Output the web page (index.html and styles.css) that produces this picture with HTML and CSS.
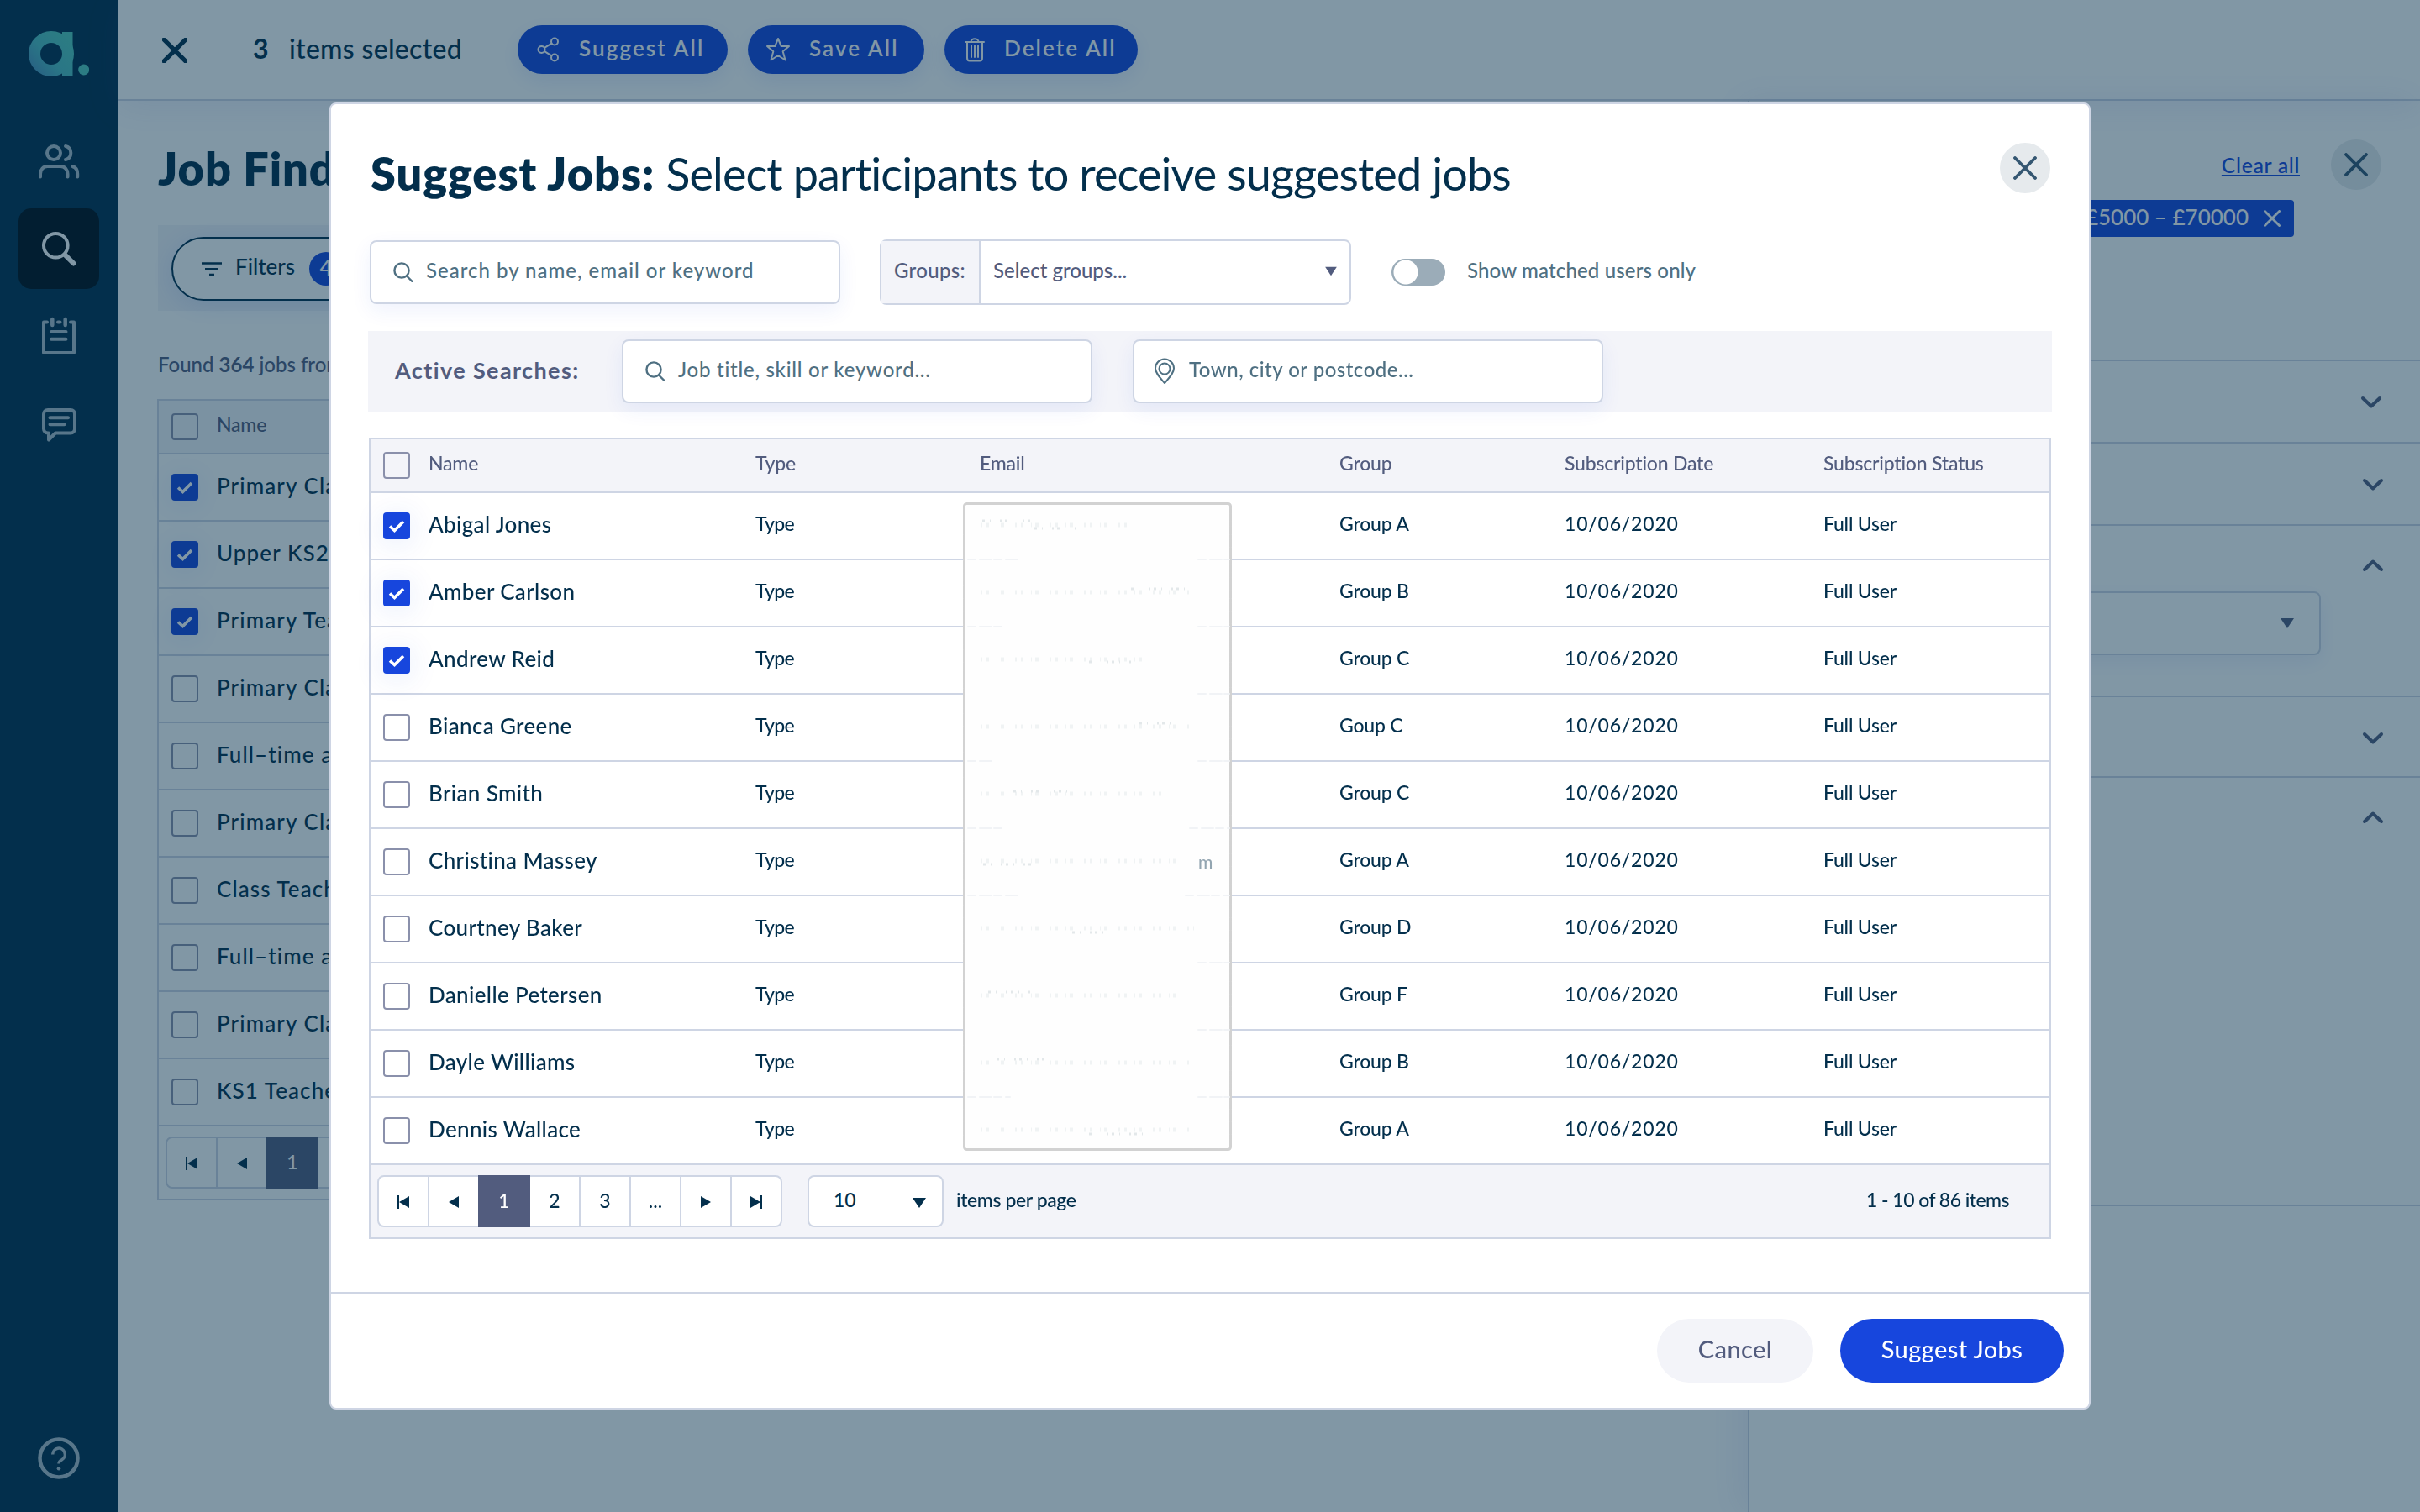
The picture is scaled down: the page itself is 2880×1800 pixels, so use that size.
FILE: index.html
```html
<!DOCTYPE html>
<html lang="en">
<head>
  <meta charset="UTF-8">
  <meta name="viewport" content="width=device-width, initial-scale=1.0">
  <title>Suggest Jobs</title>
  <link rel="stylesheet" href="styles.css">
</head>
<body>
  <svg class="sprite">
    <symbol id="cross" viewBox="0 0 28 28"><path d="M2 2 26 26M26 2 2 26"/></symbol>
    <symbol id="chevron" viewBox="0 0 26 16"><path d="M3 3 13 12.5 23 3"/></symbol>
    <symbol id="search" viewBox="0 0 24 24"><circle cx="10" cy="10" r="8.6"/><path d="M16 16.5 22.5 23"/></symbol>
    <symbol id="first" viewBox="0 0 16 16"><path d="M1 0h2v16H1zM15 1v14L3 8z"/></symbol>
    <symbol id="prev" viewBox="0 0 16 16"><path d="M14 1v14L2 8z"/></symbol>
    <symbol id="next" viewBox="0 0 16 16"><path d="M2 1v14l12-7z"/></symbol>
    <symbol id="last" viewBox="0 0 16 16"><path d="M13 0h2v16h-2zM1 1v14l12-7z"/></symbol>
    <symbol id="down" viewBox="0 0 16 14"><path d="M0 1h16L8 13z"/></symbol>
    <symbol id="tick" viewBox="0 0 20 16"><path d="M2 8.5 7.5 13.5 18 3"/></symbol>
  </svg>

  <div class="app">
    <nav class="sidebar">
      <svg class="logo" viewBox="0 0 72 54">
        <defs>
          <linearGradient id="teal" gradientUnits="userSpaceOnUse" x1="4" y1="50" x2="50" y2="10">
            <stop offset="0" stop-color="#4c8fba"/>
            <stop offset=".45" stop-color="#50bcc0"/>
            <stop offset="1" stop-color="#54c9ba"/>
          </linearGradient>
        </defs>
        <circle cx="27" cy="27" r="20" fill="none" stroke="url(#teal)" stroke-width="14"/>
        <rect x="40" y="1" width="12.5" height="52" fill="url(#teal)"/>
        <circle cx="65.7" cy="46" r="6.5" fill="#54c9ba"/>
      </svg>
      <div class="nav-item">
        <svg viewBox="0 0 96 96"><circle cx="42" cy="38" r="8"/><path d="M56 30c4.500 1 6.300 4.500 6.300 8s-2 7-6.300 8M26 66.500V63c0-5 3.500-9 8.500-9h15.500c5 0 8.500 4 8.500 9v3.500M64.500 54.200c4 1 5.700 4.500 5.700 8.800v3.500"/></svg>
      </div>
      <div class="nav-item active">
        <svg viewBox="0 0 96 96"><circle cx="44.300" cy="44.300" r="14.300"/><path class="handle" d="M56 56 65.500 65.500"/></svg>
      </div>
      <div class="nav-item">
        <svg viewBox="0 0 96 96"><path d="M34 31.500h-4v36.500h36V31.500h-4M47 31.500h2.500M39 43h17.500M39 51.700h17.500"/><path class="ring" d="M40.300 28v7M55.700 28v7"/></svg>
      </div>
      <div class="nav-item">
        <svg viewBox="0 0 96 96"><path d="M36 67.500V59.500h-1c-3 0-5-2-5-5V37c0-3 2-5 5-5h27c3 0 5 2 5 5v17.500c0 3-2 5-5 5H44zM37.500 41.300h21.500M37.500 49.300h17"/></svg>
      </div>
      <svg class="help" viewBox="-25 -25 50 50"><circle r="22.500"/><path d="M-7.300-4.500a7.300 7.300 0 1 1 11 6.200C1 3.200 0 4 0 6.500"/><circle class="dot" cy="12.200" r="2.300"/></svg>
    </nav>

    <div class="main">
      <header class="topbar">
        <svg class="icon topbar-close"><use href="#cross"/></svg>
        <div class="selected"><b>3</b><span>items selected</span></div>
        <div class="actions">
          <div class="action suggest">
            <svg viewBox="0 0 28 30"><circle cx="5.500" cy="15" r="4"/><circle cx="21" cy="5.500" r="4"/><circle cx="21" cy="24.500" r="4"/><path d="M9 12.800 17.500 7.600M9 17.200l8.500 5.200"/></svg>
            <span>Suggest All</span>
          </div>
          <div class="action save">
            <svg viewBox="0 0 30 30"><path d="M15 2l3.700 9H28l-7.300 6.300L23.500 27.500 15 22l-8.500 5.500L9.300 17.300 2 11h9.300z"/></svg>
            <span>Save All</span>
          </div>
          <div class="action delete">
            <svg viewBox="0 0 26 30"><path d="M2 6h22M8.500 6c0-5 9-5 9 0M4 6v19c0 2 1 3.500 3 3.500h12c2 0 3-1.500 3-3.500V6M9 10.500v13.500M13 10.500v13.500M17 10.500v13.500"/></svg>
            <span>Delete All</span>
          </div>
        </div>
      </header>

      <div class="content">
        <section class="list">
          <h1>Job Finder</h1>
          <div class="filter-bar">
            <div class="filter-pill">
              <svg viewBox="0 0 24 17"><path d="M0 1.500h24M4 8.200h16M9 15h6"/></svg>
              <span>Filters</span>
              <div class="badge">4</div>
            </div>
          </div>
          <p class="found">Found <b>364</b> jobs from</p>
          <div class="table">
            <div class="row head"><i class="check"></i><span class="cell">Name</span></div>
            <div class="row"><i class="check on"><svg><use href="#tick"/></svg></i><span class="name">Primary Class Teacher</span></div>
            <div class="row"><i class="check on"><svg><use href="#tick"/></svg></i><span class="name">Upper KS2 Teacher</span></div>
            <div class="row"><i class="check on"><svg><use href="#tick"/></svg></i><span class="name">Primary Teacher</span></div>
            <div class="row"><i class="check"></i><span class="name">Primary Class Teacher</span></div>
            <div class="row"><i class="check"></i><span class="name">Full–time assistant</span></div>
            <div class="row"><i class="check"></i><span class="name">Primary Class Teacher</span></div>
            <div class="row"><i class="check"></i><span class="name">Class Teacher</span></div>
            <div class="row"><i class="check"></i><span class="name">Full–time assistant</span></div>
            <div class="row"><i class="check"></i><span class="name">Primary Class Teacher</span></div>
            <div class="row"><i class="check"></i><span class="name">KS1 Teacher</span></div>
            <div class="pager plain">
              <div class="pages">
                <span class="step"><svg><use href="#first"/></svg></span>
                <span class="step back"><svg><use href="#prev"/></svg></span>
                <span class="current">1</span>
                <span>2</span>
                <span>3</span>
                <span>...</span>
                <span><svg><use href="#next"/></svg></span>
                <span><svg><use href="#last"/></svg></span>
              </div>
            </div>
          </div>
        </section>

        <aside class="panel">
          <div class="panel-head">
            <div class="panel-top">
              <a class="clear">Clear all</a>
              <div class="round"><svg class="icon"><use href="#cross"/></svg></div>
            </div>
            <div class="tag"><span>£5000 – £70000</span><svg class="icon"><use href="#cross"/></svg></div>
          </div>
          <div class="section first"><svg class="chevron"><use href="#chevron"/></svg></div>
          <div class="section"><svg class="chevron"><use href="#chevron"/></svg></div>
          <div class="section open">
            <svg class="chevron up"><use href="#chevron"/></svg>
            <div class="panel-select"><svg class="arrow"><use href="#down"/></svg></div>
          </div>
          <div class="section short"><svg class="chevron"><use href="#chevron"/></svg></div>
          <div class="section open tall"><svg class="chevron up"><use href="#chevron"/></svg></div>
        </aside>
      </div>
    </div>
  </div>

  <div class="overlay">
    <div class="modal">
      <div class="modal-body">
        <div class="modal-head">
          <h2><b>Suggest Jobs:</b> <span>Select participants to receive suggested jobs</span></h2>
          <div class="round"><svg class="icon"><use href="#cross"/></svg></div>
        </div>

        <div class="filters">
          <div class="input"><svg class="lens"><use href="#search"/></svg><span class="hint-name">Search by name, email or keyword</span></div>
          <div class="groups">
            <div class="groups-label">Groups:</div>
            <div class="groups-value">Select groups...</div>
            <svg class="arrow"><use href="#down"/></svg>
          </div>
          <div class="toggle"></div>
          <div class="toggle-label">Show matched users only</div>
        </div>

        <div class="searches">
          <b>Active Searches:</b>
          <div class="input"><svg class="lens"><use href="#search"/></svg><span class="hint-job">Job title, skill or keyword...</span></div>
          <div class="input">
            <svg class="pin" viewBox="0 0 26 32"><path d="M13 30C7 23 2 18 2 12.500a11 11 0 0 1 22 0C24 18 19 23 13 30z"/><circle cx="13" cy="13" r="6.500"/></svg>
            <span class="hint-town">Town, city or postcode...</span>
          </div>
        </div>

        <div class="table users">
          <div class="row head"><i class="check"></i><span class="cell">Name</span><span class="cell">Type</span><span class="cell">Email</span><span class="cell">Group</span><span class="cell">Subscription Date</span><span class="cell">Subscription Status</span></div>
          <div class="row"><i class="check on"><svg><use href="#tick"/></svg></i><span class="name">Abigal Jones</span><span class="cell type">Type</span><span></span><span class="cell">Group A</span><span class="cell date">10/06/2020</span><span class="cell">Full User</span></div>
          <div class="row"><i class="check on"><svg><use href="#tick"/></svg></i><span class="name">Amber Carlson</span><span class="cell type">Type</span><span></span><span class="cell">Group B</span><span class="cell date">10/06/2020</span><span class="cell">Full User</span></div>
          <div class="row"><i class="check on"><svg><use href="#tick"/></svg></i><span class="name">Andrew Reid</span><span class="cell type">Type</span><span></span><span class="cell">Group C</span><span class="cell date">10/06/2020</span><span class="cell">Full User</span></div>
          <div class="row"><i class="check"></i><span class="name">Bianca Greene</span><span class="cell type">Type</span><span></span><span class="cell">Goup C</span><span class="cell date">10/06/2020</span><span class="cell">Full User</span></div>
          <div class="row"><i class="check"></i><span class="name">Brian Smith</span><span class="cell type">Type</span><span></span><span class="cell">Group C</span><span class="cell date">10/06/2020</span><span class="cell">Full User</span></div>
          <div class="row"><i class="check"></i><span class="name">Christina Massey</span><span class="cell type">Type</span><span></span><span class="cell">Group A</span><span class="cell date">10/06/2020</span><span class="cell">Full User</span></div>
          <div class="row"><i class="check"></i><span class="name">Courtney Baker</span><span class="cell type">Type</span><span></span><span class="cell">Group D</span><span class="cell date">10/06/2020</span><span class="cell">Full User</span></div>
          <div class="row"><i class="check"></i><span class="name">Danielle Petersen</span><span class="cell type">Type</span><span></span><span class="cell">Group F</span><span class="cell date">10/06/2020</span><span class="cell">Full User</span></div>
          <div class="row"><i class="check"></i><span class="name">Dayle Williams</span><span class="cell type">Type</span><span></span><span class="cell">Group B</span><span class="cell date">10/06/2020</span><span class="cell">Full User</span></div>
          <div class="row"><i class="check"></i><span class="name">Dennis Wallace</span><span class="cell type">Type</span><span></span><span class="cell">Group A</span><span class="cell date">10/06/2020</span><span class="cell">Full User</span></div>

          <!-- white patch over the email column, with faint specks left in it -->
          <svg class="patch" viewBox="0 0 320 772">
            <rect x="1.500" y="1.500" width="317" height="769" rx="3"/>
            <g class="specks">
              <path d="M21 27h176M21 107h252M21 187h196M21 267h248M21 347h220M21 427h236M21 507h254M21 587h240M21 667h250M21 747h252"/>
              <path class="alt" d="M23 22h60M85 31h50M200 103h64M150 190h50M210 263h40M60 344h70M24 431h60M130 512h40M30 583h50M40 663h60M150 752h70"/>
            </g>
            <path class="lines" d="M280 68h37M280 148h37M280 228h37M280 308h37M270 388h47M265 468h52M280 548h37M280 628h37M280 708h37M6 68h60M6 148h40M6 308h30M6 388h40M6 468h60M6 708h50"/>
            <text x="280" y="436">m</text>
          </svg>

          <div class="pager">
            <div class="pages">
              <span class="step"><svg><use href="#first"/></svg></span>
              <span class="step back"><svg><use href="#prev"/></svg></span>
              <span class="current">1</span>
              <span>2</span>
              <span>3</span>
              <span>...</span>
              <span><svg><use href="#next"/></svg></span>
              <span><svg><use href="#last"/></svg></span>
            </div>
            <div class="page-size"><span>10</span><svg class="arrow"><use href="#down"/></svg></div>
            <span class="per-page">items per page</span>
            <span class="total">1 - 10 of 86 items</span>
          </div>
        </div>
      </div>

      <div class="modal-footer">
        <div class="btn cancel">Cancel</div>
        <div class="btn primary">Suggest Jobs</div>
      </div>
    </div>
  </div>
</body>
</html>
```
FILE: styles.css
```css
* {
  box-sizing: border-box;
}
body {
  margin: 0;
  width: 2880px;
  height: 1800px;
  overflow: hidden;
  font-family: Lato, "Open Sans", sans-serif;
  font-weight: 500;
  font-size: 23px;
  font-variant-ligatures: none;
  color: #032f4c;
  background: #fff;
}
svg {
  display: block;
  fill: none;
  stroke-linecap: round;
  stroke-linejoin: round;
}
.sprite {
  display: none;
}
b {
  font-weight: 700;
}

.app {
  display: flex;
  height: 1800px;
}

/* sidebar */
.sidebar {
  width: 140px;
  flex: none;
  display: flex;
  flex-direction: column;
  align-items: center;
  gap: 8px;
  padding: 37px 0 39px;
  background: #032f4c;
}
.logo {
  width: 72px;
  height: 54px;
  margin-bottom: 45px;
}
.nav-item {
  width: 96px;
  height: 96px;
  border-radius: 15px;
}
.nav-item svg {
  stroke: #adbdc8;
  stroke-width: 4;
}
.nav-item .ring {
  stroke-width: 4.5;
}
.nav-item.active {
  background: #000d17;
}
.nav-item.active svg {
  stroke: #fff;
}
.nav-item .handle {
  stroke-width: 6;
}
.help {
  width: 50px;
  height: 50px;
  margin-top: auto;
  stroke: #adbdc8;
  stroke-width: 4.5;
}
.help path {
  stroke-width: 3.5;
  stroke-linecap: butt;
}
.help .dot {
  fill: #adbdc8;
  stroke: none;
}

/* top bar */
.main {
  flex: 1;
  display: flex;
  flex-direction: column;
}
.topbar {
  display: flex;
  align-items: center;
  height: 120px;
  padding-left: 53px;
  border-bottom: 2px solid #ced5e4;
  box-shadow: 0 8px 40px rgba(82, 92, 200, .1);
}
.icon {
  width: 28px;
  height: 28px;
  stroke: #355772;
  stroke-width: 3.8;
}
.topbar-close {
  width: 30px;
  height: 30px;
  stroke: #032f4c;
  stroke-width: 4.8;
  margin-top: 2px;
}
.selected {
  display: flex;
  width: 315px;
  margin-left: 78px;
  padding-bottom: 4px;
  font-size: 32px;
  letter-spacing: .3px;
}
.selected b {
  width: 43px;
}
.actions {
  display: flex;
  gap: 24px;
}
.action {
  display: flex;
  align-items: center;
  height: 58px;
  padding-left: 23px;
  border-radius: 29px;
  background: #1746dd;
  color: #fff;
  font-size: 26px;
  font-weight: 600;
  letter-spacing: 2.1px;
  box-shadow: 0 8px 24px rgba(23, 70, 221, .1);
}
.action svg {
  width: 28px;
  height: 30px;
  margin-right: 22px;
  stroke: #fff;
  stroke-width: 2;
}
.action span {
  padding-bottom: 4px;
}
.suggest {
  width: 250px;
}
.save {
  width: 210px;
  padding-left: 21px;
}
.save svg {
  width: 30px;
}
.delete {
  width: 230px;
}
.delete svg {
  width: 26px;
}

/* job list */
.content {
  flex: 1;
  display: flex;
}
.list {
  width: 1940px;
  padding: 0 48px 0 47px;
}
h1 {
  height: 148px;
  margin: 0 0 0 1px;
  padding-top: 14px;
  line-height: 134px;
  font-size: 54px;
  font-weight: 800;
  letter-spacing: .9px;
}
.filter-bar {
  height: 102px;
  margin-left: 1px;
  padding: 14px 16px;
  background: #f3f4f9;
}
.filter-pill {
  display: flex;
  align-items: center;
  width: 260px;
  height: 76px;
  padding-left: 34px;
  border: 2px solid #032f4c;
  border-radius: 38px;
  background: #fff;
  box-shadow: 0 6px 30px rgba(23, 70, 221, .12);
  font-size: 26px;
}
.filter-pill svg {
  width: 24px;
  height: 17px;
  margin-right: 16px;
  stroke: #032f4c;
  stroke-width: 2.6;
  stroke-linecap: butt;
}
.filter-pill span {
  width: 88px;
  padding-bottom: 6px;
}
.badge {
  width: 40px;
  height: 40px;
  border-radius: 50%;
  background: #1746dd;
  color: #fff;
  line-height: 37px;
  text-align: center;
}
.found {
  height: 105px;
  margin: 0 0 0 1px;
  padding-top: 21px;
  line-height: 85px;
  font-size: 24px;
  color: #525c7e;
}

/* tables */
.table {
  border: 2px solid #ced5e4;
}
.row {
  display: grid;
  grid-template-columns: 54px 389px 267px 428px 268px 308px 1fr;
  align-items: center;
  height: 80px;
  padding-left: 15px;
  border-bottom: 2px solid #ced5e4;
}
.head {
  height: 64px;
  background: #f3f4f9;
  color: #525c7e;
}
.cell {
  padding-bottom: 7px;
  letter-spacing: -.2px;
}
.cell.type {
  letter-spacing: -.7px;
}
.cell.date {
  letter-spacing: .8px;
}
.name {
  padding-bottom: 4px;
  font-size: 26px;
  letter-spacing: .35px;
}
.list .name {
  letter-spacing: 1.1px;
}
.check {
  display: flex;
  align-items: center;
  justify-content: center;
  width: 32px;
  height: 32px;
  border: 2px solid #8a90ab;
  border-radius: 4px;
}
.check.on {
  border: none;
  background: #1746dd;
  box-shadow: 0 4px 36px rgba(23, 70, 221, .12);
}
.check svg {
  width: 20px;
  height: 16px;
  stroke: #fff;
  stroke-width: 3.6;
  stroke-linecap: butt;
  stroke-linejoin: miter;
}
.pager {
  display: flex;
  align-items: center;
  height: 86px;
  padding: 0 48px 0 8px;
  background: #f3f4f9;
}
.pager.plain {
  background: #fff;
}
.pages {
  display: flex;
  width: 482px;
  height: 62px;
  border: 2px solid #ced5e4;
  border-radius: 8px;
  background: #fff;
}
.pages span {
  flex: 1;
  display: flex;
  align-items: center;
  justify-content: center;
  padding-bottom: 3px;
  border-right: 2px solid #ced5e4;
}
.pages span:last-child {
  border-right: none;
}
.pages .step {
  flex: none;
  width: 60px;
}
.pages .back {
  width: 58px;
  border: none;
}
.pages svg {
  width: 16px;
  height: 16px;
  margin-top: 4px;
  fill: #032f4c;
}
.pages .current {
  flex: none;
  width: 62px;
  margin: -2px 0;
  border: none;
  background: #525c7e;
  color: #fff;
}
.arrow {
  width: 16px;
  height: 14px;
  fill: #525c7e;
}
.page-size {
  display: flex;
  align-items: center;
  justify-content: space-between;
  width: 162px;
  height: 62px;
  margin: 0 15px 0 30px;
  padding: 0 19px 0 29px;
  border: 2px solid #ced5e4;
  border-radius: 8px;
  background: #fff;
}
.page-size span {
  padding-bottom: 4px;
}
.page-size .arrow {
  margin-top: 3px;
  fill: #032f4c;
}
.per-page,
.total {
  padding-bottom: 4px;
  letter-spacing: -.4px;
}
.total {
  margin-left: auto;
  letter-spacing: -.55px;
}

/* filter panel */
.panel {
  flex: 1;
  border-left: 2px solid #ced5e4;
  box-shadow: -8px 0 40px rgba(82, 92, 200, .1);
}
.panel-head {
  display: flex;
  flex-direction: column;
  align-items: flex-end;
  height: 310px;
  padding: 46px 46px 0 0;
  border-bottom: 2px solid #ced5e4;
}
.panel-top {
  display: flex;
  align-items: center;
  gap: 37px;
}
.clear {
  color: #1746dd;
  font-size: 25px;
  letter-spacing: .6px;
  text-decoration: underline;
  text-decoration-thickness: 2px;
  text-underline-offset: 2px;
}
.round {
  display: flex;
  align-items: center;
  justify-content: center;
  width: 60px;
  height: 60px;
  padding: 0 1px 1px 0;
  border-radius: 50%;
  background: #e6eaed;
}
.tag {
  display: flex;
  align-items: center;
  gap: 18px;
  height: 44px;
  margin: 12px 104px 0 0;
  padding: 0 16px;
  border-radius: 4px;
  background: #1746dd;
  color: #fff;
  font-size: 26px;
}
.tag span {
  padding-bottom: 5px;
}
.tag .icon {
  width: 20px;
  height: 20px;
  stroke: #fff;
  stroke-width: 4;
}
.section {
  display: flex;
  flex-direction: column;
  align-items: flex-end;
  height: 98px;
  padding: 41px 43px 0 0;
  border-bottom: 2px solid #ced5e4;
}
.section.first {
  padding-right: 45px;
}
.chevron {
  width: 26px;
  height: 16px;
  flex: none;
  stroke: #525c7e;
  stroke-width: 4;
}
.chevron.up {
  transform: rotate(180deg);
}
.section.open {
  height: 204px;
  padding-top: 39px;
}
.section.short {
  height: 96px;
}
.section.open.tall {
  height: 510px;
}
.panel-select {
  display: flex;
  align-items: center;
  justify-content: flex-end;
  width: 600px;
  height: 76px;
  margin: 23px 75px 0 0;
  padding-right: 30px;
  border: 2px solid #ced5e4;
  border-radius: 8px;
  box-shadow: 0 8px 24px rgba(23, 70, 221, .08);
}

/* modal */
.overlay {
  position: fixed;
  inset: 0;
  display: flex;
  align-items: center;
  justify-content: center;
  background: rgba(3, 47, 76, .5);
}
.modal {
  display: flex;
  flex-direction: column;
  width: 2096px;
  height: 1556px;
  border: 2px solid #ced5e4;
  border-radius: 8px;
  background: #fff;
}
.modal-body {
  padding: 46px 45px 0;
}
.modal-head {
  display: flex;
  align-items: center;
  justify-content: space-between;
  height: 60px;
  padding: 0 1px 0 2px;
}
h2 {
  margin: 0;
  padding-top: 13px;
  font-size: 54px;
  font-weight: 400;
  letter-spacing: -.9px;
  white-space: nowrap;
}
h2 b {
  font-weight: 800;
  letter-spacing: .95px;
}
.filters {
  display: flex;
  align-items: center;
  height: 78px;
  margin: 55px 0 0 1px;
}
.input {
  display: flex;
  align-items: center;
  width: 560px;
  height: 76px;
  padding-left: 26px;
  border: 2px solid #ced5e4;
  border-radius: 8px;
  background: #fff;
  box-shadow: 0 8px 24px rgba(23, 70, 221, .07);
  font-size: 24px;
  color: #4f7082;
}
.input span {
  padding-bottom: 5px;
}
.hint-name {
  letter-spacing: 1px;
}
.hint-job {
  letter-spacing: .75px;
}
.hint-town {
  letter-spacing: .5px;
}
.lens {
  width: 24px;
  height: 24px;
  margin-right: 15px;
  stroke: #4f7082;
  stroke-width: 2.4;
}
.pin {
  width: 26px;
  height: 32px;
  margin: 0 16px 0 -3px;
  stroke: #4f7082;
  stroke-width: 2;
}
.groups {
  display: flex;
  align-items: center;
  width: 561px;
  height: 78px;
  margin-left: 47px;
  padding-right: 15px;
  border: 2px solid #ced5e4;
  border-radius: 8px;
  font-size: 24px;
  color: #525c7e;
}
.groups .arrow {
  width: 14px;
  height: 12px;
  margin-bottom: 2px;
}
.groups-label {
  width: 118px;
  height: 74px;
  padding-left: 15px;
  border-right: 2px solid #ced5e4;
  background: #f3f4f9;
  line-height: 69px;
  letter-spacing: .3px;
}
.groups-value {
  flex: 1;
  padding: 0 0 5px 15px;
}
.toggle {
  width: 64px;
  height: 32px;
  margin: 0 26px 0 48px;
  border-radius: 16px;
  background: radial-gradient(circle at 17px 16px, #fff 14px, #9bacb8 15px);
}
.toggle-label {
  padding-bottom: 5px;
  font-size: 24px;
  letter-spacing: .15px;
  color: #4f7082;
}
.searches {
  display: flex;
  align-items: center;
  gap: 48px;
  height: 96px;
  margin: 31px -1px;
  padding-left: 32px;
  background: #f3f4f9;
}
.searches b {
  width: 222px;
  padding-bottom: 4px;
  font-size: 27px;
  letter-spacing: 1.4px;
  color: #525c7e;
  white-space: nowrap;
}
.users {
  position: relative;
}
.patch {
  position: absolute;
  left: 705px;
  top: 75px;
  width: 320px;
  height: 772px;
}
.patch rect {
  fill: #fefefe;
  stroke: #d2d2d2;
  stroke-width: 3;
  stroke-dasharray: 5 .5 9 .7;
}
.specks path {
  stroke: #f0f3f4;
  stroke-width: 5;
  stroke-linecap: butt;
  stroke-dasharray: 2 5 3 9 1 4 4 13;
}
.specks .alt {
  stroke: #e3e8ea;
  stroke-width: 3;
  stroke-dasharray: 3 6 1 11 2 4;
}
.patch .lines {
  stroke: #f1f3f6;
  stroke-width: 2;
  stroke-dasharray: 9 5 14 3;
}
.patch text {
  fill: #93a5b1;
  font-size: 21px;
}
.modal-footer {
  display: flex;
  justify-content: flex-end;
  gap: 32px;
  height: 138px;
  margin-top: auto;
  padding: 30px;
  border-top: 2px solid #ced5e4;
}
.btn {
  height: 76px;
  border-radius: 38px;
  line-height: 71px;
  text-align: center;
  font-size: 29px;
  letter-spacing: .4px;
}
.cancel {
  width: 186px;
  background: #f3f4f9;
  color: #525c7e;
}
.primary {
  width: 266px;
  background: #1746dd;
  color: #fff;
}
```
